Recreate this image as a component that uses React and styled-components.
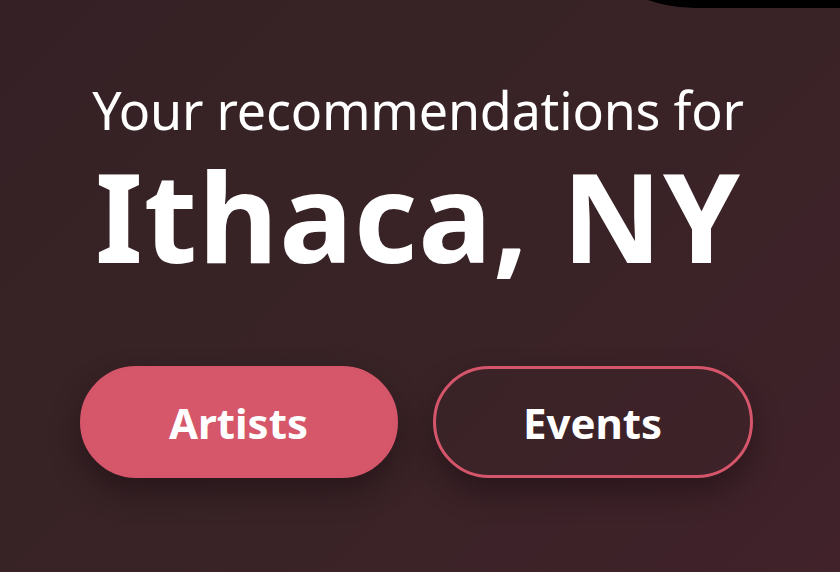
import React, { useState } from 'react';
import styled, { createGlobalStyle } from 'styled-components';

const GlobalStyle = createGlobalStyle`
    html, body {
        margin:0;
        padding:0;
        height:100%;
    }
    body{
        font-family:"Noto Sans", "Open Sans", sans-serif;
        background:#372226;
        overflow:hidden;
    }
`

function App() {
    const [tab, setTab] = useState('artists');
    return (
        <Page>
            <GlobalStyle />
            <CornerTab />
            <Hero>
                <Subtitle>Your recommendations for</Subtitle>
                <City>Ithaca, NY</City>
                <Buttons>
                    <PillButton active={tab === 'artists'} onClick={() => setTab('artists')}>
                        Artists
                    </PillButton>
                    <PillButton active={tab === 'events'} onClick={() => setTab('events')}>
                        Events
                    </PillButton>
                </Buttons>
            </Hero>
        </Page>
    )
}

export default App;

const Page = styled.div`
    position:relative;
    width:840px;
    height:572px;
    overflow:hidden;
    background:linear-gradient(135deg, #352125 0%, #392327 55%, #41222a 100%);
`

const CornerTab = styled.div`
    position:absolute;
    top:-276px;
    left:553px;
    width:600px;
    height:284px;
    border-radius:142px;
    background:#000;
`

const Hero = styled.div`
    display:flex;
    flex-direction:column;
    align-items:center;
    padding-top:78px;
    padding-right:4px;
`

const Subtitle = styled.h2`
    margin:0;
    color:#fff;
    font-weight:400;
    font-size:52px;
    line-height:64px;
    letter-spacing:-0.2px;
`

const City = styled.h1`
    margin:0;
    margin-top:12px;
    color:#fff;
    font-weight:700;
    font-size:123px;
    line-height:124px;
    letter-spacing:1px;
`

const Buttons = styled.div`
    display:flex;
    gap:35px;
    margin-top:88px;
    margin-right:4px;
`

const PillButton = styled.button`
    width:${props => props.active ? '318px' : '320px'};
    height:112px;
    border-radius:56px;
    border:3px solid #d5566a;
    background:${props => props.active ? '#d55769' : 'transparent'};
    color:#fff;
    font-family:inherit;
    font-weight:700;
    font-size:42px;
    cursor:pointer;
    box-shadow:0 14px 30px rgba(20,8,12,0.45);
`
